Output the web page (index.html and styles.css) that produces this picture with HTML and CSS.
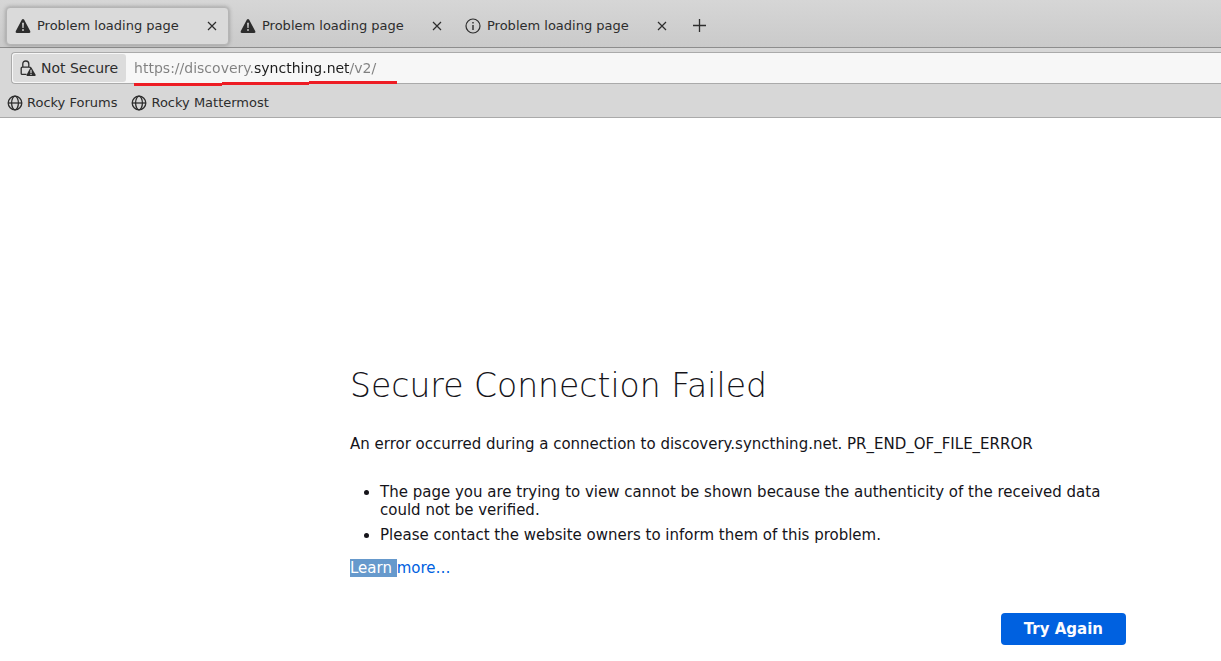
FILE: index.html
```
<!DOCTYPE html>
<html lang="en">
<head>
    <meta charset="UTF-8">
    <meta name="viewport" content="width=device-width, initial-scale=1.0">
    <title>Problem loading page</title>
    <link rel="stylesheet" href="styles.css">
</head>
<body>
    <svg class="symbols" aria-hidden="true">
        <symbol id="warning" viewBox="0 0 16 16">
            <path fill="currentColor" fill-rule="evenodd" d="M6.8 1.7 Q8 .2 9.2 1.7 L15.3 13.2 Q15.8 15 14.2 15 H1.8 Q.2 15 .7 13.2 Z M7.1 4.8 L7.4 10 H8.6 L8.9 4.8 Z M7.1 11.2 V12.8 H8.9 V11.2 Z"/>
        </symbol>
        <symbol id="globe" viewBox="0 0 16 16">
            <g fill="none" stroke="currentColor" stroke-width="1.3">
                <circle cx="8" cy="8" r="6.8"/>
                <ellipse cx="8" cy="8" rx="3.4" ry="6.8"/>
                <path d="M1 8H15"/>
            </g>
        </symbol>
        <symbol id="close" viewBox="0 0 10 10">
            <path fill="none" stroke="currentColor" stroke-width="1.2" d="M1 1L9 9M9 1L1 9"/>
        </symbol>
    </svg>

    <header>
        <nav class="tabs">
            <div class="tab active">
                <svg class="icon"><use href="#warning"/></svg>
                <span class="tab-title">Problem loading page</span>
                <button class="tab-close" aria-label="Close tab"><svg><use href="#close"/></svg></button>
            </div>
            <div class="tab">
                <svg class="icon"><use href="#warning"/></svg>
                <span class="tab-title">Problem loading page</span>
                <button class="tab-close" aria-label="Close tab"><svg><use href="#close"/></svg></button>
            </div>
            <div class="tab">
                <svg class="icon" viewBox="0 0 16 16">
                    <circle cx="8" cy="8" r="7" fill="none" stroke="currentColor" stroke-width="1.2"/>
                    <path d="M8 4V5.5M8 7V12" stroke="currentColor" stroke-width="1.4"/>
                </svg>
                <span class="tab-title">Problem loading page</span>
                <button class="tab-close" aria-label="Close tab"><svg><use href="#close"/></svg></button>
            </div>
            <button class="new-tab" aria-label="New tab">
                <svg viewBox="0 0 13 13"><path d="M6.5 0V13M0 6.5H13" stroke="currentColor" stroke-width="1.3"/></svg>
            </button>
        </nav>

        <div class="toolbar">
            <div class="urlbar">
                <button class="identity">
                    <svg class="icon" viewBox="0 0 16 16">
                        <path d="M6.5 14.4H2.2Q1.2 14.4 1.2 13.4V8.2Q1.2 7.2 2.2 7.2H9.4Q10.4 7.2 10.5 8M2.8 7V4Q2.8 1 5.8 1T8.8 4V7" fill="none" stroke="currentColor" stroke-width="1.3"/>
                        <path d="M10.4 7.8Q11 6.9 11.6 7.8L15.6 14.8Q15.8 16 15 16H7.2Q6.2 16 6.6 14.8Z" fill="currentColor"/>
                        <path d="M11 9.8V13M11 13.8V15" stroke="#dcdcdc" stroke-width="1.2"/>
                    </svg>
                    Not Secure
                </button>
                <div class="address">
                    <input type="text" aria-label="Address" value="https://discovery.syncthing.net/v2/" spellcheck="false">
                    <svg class="underline" viewBox="0 0 263 5">
                        <path d="M0 3.5H88M88 2.5H175M175 1.5H263" stroke="#ed1c24" stroke-width="3"/>
                    </svg>
                </div>
            </div>
        </div>

        <nav class="bookmarks">
            <a href="#"><svg class="icon"><use href="#globe"/></svg>Rocky Forums</a>
            <a href="#"><svg class="icon"><use href="#globe"/></svg>Rocky Mattermost</a>
        </nav>
    </header>

    <main>
        <h1>Secure Connection Failed</h1>
        <p>An error occurred during a connection to discovery.syncthing.net. PR_END_OF_FILE_ERROR</p>
        <ul>
            <li>The page you are trying to view cannot be shown because the authenticity of the received data could not be verified.</li>
            <li>Please contact the website owners to inform them of this problem.</li>
        </ul>
        <a class="learn-more" href="#"><mark>Learn </mark>more…</a>
        <div class="actions">
            <button class="try-again">Try Again</button>
        </div>
    </main>
</body>
</html>
```
FILE: styles.css
```
* {
    box-sizing: border-box;
}
body {
    margin: 0;
    background: #fff;
    color: #15141a;
    font-family: "DejaVu Sans", sans-serif;
    font-size: 15px;
    line-height: 18px;
    overflow-x: hidden;
}
button {
    border: none;
    padding: 0;
    background: none;
    color: inherit;
    font: inherit;
    cursor: pointer;
}
.symbols {
    position: absolute;
    width: 0;
    height: 0;
}
.icon {
    flex: none;
    width: 16px;
    height: 16px;
}

/* browser chrome */
header {
    background: #d7d7d7;
    border-bottom: 1px solid #aaa;
    color: #2d2d2d;
    font-size: 13px;
}
.tabs {
    display: flex;
    align-items: center;
    gap: 2px;
    height: 48px;
    padding: 4px 6px 0;
    background: linear-gradient(#d6d6d6, #cacaca);
    border-bottom: 1px solid #8d8d8d;
}
.tab {
    display: flex;
    align-items: center;
    width: 223px;
    height: 38px;
    padding: 0 8px;
    border: 1px solid transparent;
    border-radius: 4px;
    white-space: nowrap;
}
.tab.active {
    background: #dadada;
    border-color: #b5b5b5;
    box-shadow: 0 0 4px rgba(0, 0, 0, 0.3);
}
.tab-title {
    flex: 1;
    margin-left: 6px;
}
.tab-close {
    display: flex;
    padding: 3px;
}
.tab-close svg {
    width: 10px;
    height: 10px;
}
.new-tab {
    display: flex;
    margin-left: 12px;
}
.new-tab svg {
    width: 13px;
    height: 13px;
}
.toolbar {
    padding: 4px 0 0 11px;
}
.urlbar {
    display: flex;
    height: 32px;
    padding: 1px;
    background: #f7f7f7;
    border: 1px solid #aaa;
    border-right: none;
    border-radius: 4px 0 0 4px;
}
.identity {
    display: flex;
    align-items: center;
    gap: 5px;
    padding: 0 8px 0 7px;
    background: #dcdcdc;
    border-radius: 3px;
    font-size: 14px;
    white-space: nowrap;
}
.address {
    position: relative;
    flex: 1;
    display: flex;
    margin-left: 8px;
}
/* the host part of the address is darker than the rest */
.address input {
    flex: 1;
    border: none;
    padding: 0;
    background: linear-gradient(90deg, #808080 119px, #1c1c1c 119px, #1c1c1c 215px, #808080 215px);
    -webkit-background-clip: text;
    background-clip: text;
    color: transparent;
    font: inherit;
    font-size: 14px;
    outline: none;
}
.underline {
    position: absolute;
    left: 0;
    bottom: -4px;
    width: 263px;
    height: 5px;
}
.bookmarks {
    display: flex;
    gap: 14px;
    height: 33px;
    padding: 4px 7px 0;
}
.bookmarks a {
    display: flex;
    align-items: center;
    gap: 4px;
    color: inherit;
    text-decoration: none;
    white-space: nowrap;
}

/* error page */
main {
    max-width: 1126px;
    padding: 244px 0 16px 350px;
}
h1 {
    margin: 0 0 25px;
    font-size: 33px;
    font-weight: 200;
    line-height: 48px;
}
p {
    margin: 0 0 30px;
}
ul {
    margin: 0;
    padding-left: 30px;
}
li {
    margin-bottom: 7px;
}
.learn-more {
    display: inline-block;
    margin-top: 8px;
    color: #0061e0;
    text-decoration: none;
}
mark {
    background: #6699cc;
    color: #fff;
}
.actions {
    display: flex;
    justify-content: flex-end;
    margin-top: 36px;
}
.try-again {
    height: 32px;
    padding: 0 23px;
    background: #0061e0;
    border-radius: 4px;
    color: #fbfbfe;
    font-weight: bold;
}
```
